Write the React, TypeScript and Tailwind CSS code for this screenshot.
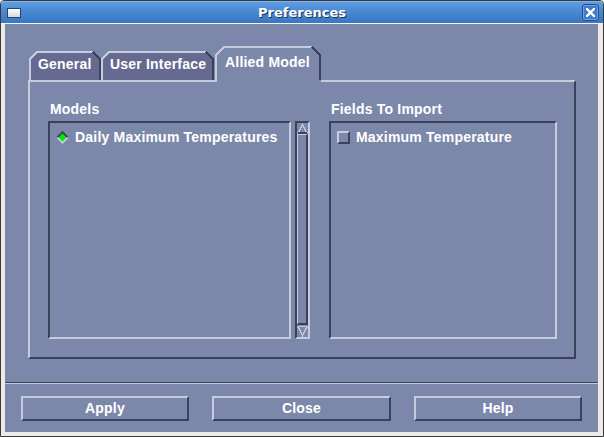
import React from "react";

const LIGHT = "#c6cbdd";
const DARK = "#3b4159";
const BG = "#7c88aa";
const TAB = "#666a90";

function Tab({ w, label, selected }: { w: number; label: string; selected?: boolean }) {
  const h = selected ? 36 : 29;
  const c = selected ? 9 : 8;
  return (
    <div
      className={
        "relative shrink-0 " +
        (selected ? "z-10 -mb-[2px] pt-[8px] pl-[10px]" : "pt-[5px] pl-[9px]")
      }
      style={{ width: w, height: h }}
    >
      <svg className="absolute inset-0" width={w} height={h} shapeRendering="crispEdges">
        <polygon
          points={`0,${h} 0,${c} ${c},0 ${w - c},0 ${w},${c} ${w},${h}`}
          fill={selected ? BG : TAB}
        />
        <polyline
          points={`1,${h} 1,${c} ${c},1 ${w - c},1`}
          fill="none"
          stroke={LIGHT}
          strokeWidth={2}
        />
        <polyline
          points={`${w - c},1 ${w - 1},${c} ${w - 1},${selected ? h - 2 : h}`}
          fill="none"
          stroke={DARK}
          strokeWidth={2}
        />
      </svg>
      <span className="relative block text-[14px] leading-[16px] font-bold text-white tracking-[0.2px] whitespace-nowrap">{label}</span>
    </div>
  );
}

function Button({ w, label }: { w: number; label: string }) {
  return (
    <div
      className="h-[25px] flex items-center justify-center border-2 border-t-[#c6cbdd] border-l-[#c6cbdd] border-b-[#3b4159] border-r-[#3b4159] text-[14px] font-bold text-white leading-[16px] tracking-[0.2px] pb-[1px]"
      style={{ width: w }}
    >
      {label}
    </div>
  );
}

export default function App() {
  return (
    <div className="w-[604px] h-[437px] bg-[#eeebe6] border border-[#3a3a3a] rounded-t-[4px] flex flex-col font-['Liberation_Sans',Arial,sans-serif] overflow-hidden">
      {/* Title bar */}
      <div className="h-[22px] shrink-0 grid grid-cols-[1fr_auto_1fr] items-center bg-gradient-to-b from-[#5f9ee3] via-[#4686d2] to-[#3a77c2] rounded-t-[3px] border-t border-[#7fb2ea]">
        <div className="pl-[6px] flex items-center">
          <div className="w-[14px] h-[10px] border border-[#27466f] bg-gradient-to-b from-[#ffffff] to-[#d8d8d8]" />
        </div>
        <div className="font-['DejaVu_Sans',sans-serif] font-bold text-[13px] leading-[16px] text-white [text-shadow:1px_1px_0_#1d3557]">
          Preferences
        </div>
        <div className="flex justify-end pr-[4px]">
          <div className="w-[17px] h-[17px] rounded-[3px] border border-[#234e86] flex items-center justify-center bg-[#3f7dc8] shadow-[inset_0_0_0_1px_#6fa3e0]">
            <svg width="9" height="9" viewBox="0 0 9 9">
              <path d="M1 1 L8 8 M8 1 L1 8" stroke="#ffffff" strokeWidth="2.4" strokeLinecap="square" />
            </svg>
          </div>
        </div>
      </div>
      <div className="h-px shrink-0 bg-[#f4f2ee]" />

      {/* Body */}
      <div className="ml-[4px] mr-[5px] h-[408px] shrink-0 bg-[#7c88aa] flex flex-col">
        <div className="pt-[22px] pl-[23px]">
          {/* tabs */}
          <div className="h-[34px] flex items-end pl-[1px]">
            <Tab w={72} label="General" />
            <Tab w={113} label="User Interface" />
            <div className="w-[1px]" />
            <Tab w={106} label="Allied Model" selected />
          </div>
          {/* panel */}
          <div className="w-[548px] h-[279px] border-2 border-t-[#c6cbdd] border-l-[#c6cbdd] border-b-[#3b4159] border-r-[#3b4159] pl-[18px] pt-[19px] flex gap-[19px]">
            {/* Models */}
            <div className="flex flex-col">
              <div className="ml-[2px] h-[16px] text-[14px] leading-[16px] font-bold text-white tracking-[0.2px]">Models</div>
              <div className="mt-[4px] flex gap-[4px]">
                <div className="w-[243px] h-[218px] border-2 border-t-[#3b4159] border-l-[#3b4159] border-b-[#c6cbdd] border-r-[#c6cbdd] pl-[6px] pt-[6px]">
                  <div className="flex items-center gap-[6px] h-[16px]">
                    <svg width="13" height="13" viewBox="0 0 13 13" className="shrink-0">
                      <polygon points="0,6.5 6.5,0 13,6.5" fill="#3b4159" />
                      <polygon points="0,6.5 6.5,13 13,6.5" fill="#c6cbdd" />
                      <polygon points="2.5,6.5 6.5,2.5 10.5,6.5 6.5,10.5" fill="#00ee00" />
                    </svg>
                    <span className="text-[14px] leading-[16px] font-bold text-white whitespace-nowrap tracking-[0.2px]">
                      Daily Maximum Temperatures
                    </span>
                  </div>
                </div>
                {/* scrollbar */}
                <div className="w-[15px] h-[218px] border-2 border-t-[#3b4159] border-l-[#3b4159] border-b-[#c6cbdd] border-r-[#c6cbdd] flex flex-col">
                  <svg width="11" height="11" viewBox="0 0 11 11" className="shrink-0" shapeRendering="crispEdges">
                    <polyline points="1,10 5.5,1.5 10,10" fill="none" stroke="#c6cbdd" strokeWidth="1.4" />
                    <line x1="1" y1="10" x2="10" y2="10" stroke="#3b4159" strokeWidth="1.4" />
                  </svg>
                  <div className="flex-1 border-t border-l border-t-[#c6cbdd] border-l-[#c6cbdd] border-b-2 border-r-2 border-b-[#3b4159] border-r-[#3b4159]" />
                  <svg width="11" height="12" viewBox="0 0 11 12" className="shrink-0" shapeRendering="crispEdges">
                    <line x1="1" y1="1.5" x2="10" y2="1.5" stroke="#c6cbdd" strokeWidth="1.4" />
                    <polyline points="1,2 5.5,10.5 10,2" fill="none" stroke="#c6cbdd" strokeWidth="1.4" />
                  </svg>
                </div>
              </div>
            </div>
            {/* Fields */}
            <div className="flex flex-col">
              <div className="ml-[2px] h-[16px] text-[14px] leading-[16px] font-bold text-white tracking-[0.2px]">Fields To Import</div>
              <div className="mt-[4px] w-[228px] h-[218px] border-2 border-t-[#3b4159] border-l-[#3b4159] border-b-[#c6cbdd] border-r-[#c6cbdd] pl-[6px] pt-[6px]">
                <div className="flex items-center gap-[6px] h-[16px]">
                  <div className="w-[13px] h-[13px] shrink-0 border-2 border-t-[#c6cbdd] border-l-[#c6cbdd] border-b-[#3b4159] border-r-[#3b4159]" />
                  <span className="text-[14px] leading-[16px] font-bold text-white whitespace-nowrap tracking-[0.2px]">
                    Maximum Temperature
                  </span>
                </div>
              </div>
            </div>
          </div>
        </div>

        {/* separator */}
        <div className="mt-[23px] h-px bg-[#3b4159]" />
        <div className="h-px bg-[#c6cbdd]" />

        {/* buttons */}
        <div className="pt-[12px] pl-[16px] flex gap-[23px]">
          <Button w={168} label="Apply" />
          <Button w={179} label="Close" />
          <Button w={168} label="Help" />
        </div>
      </div>
    </div>
  );
}
